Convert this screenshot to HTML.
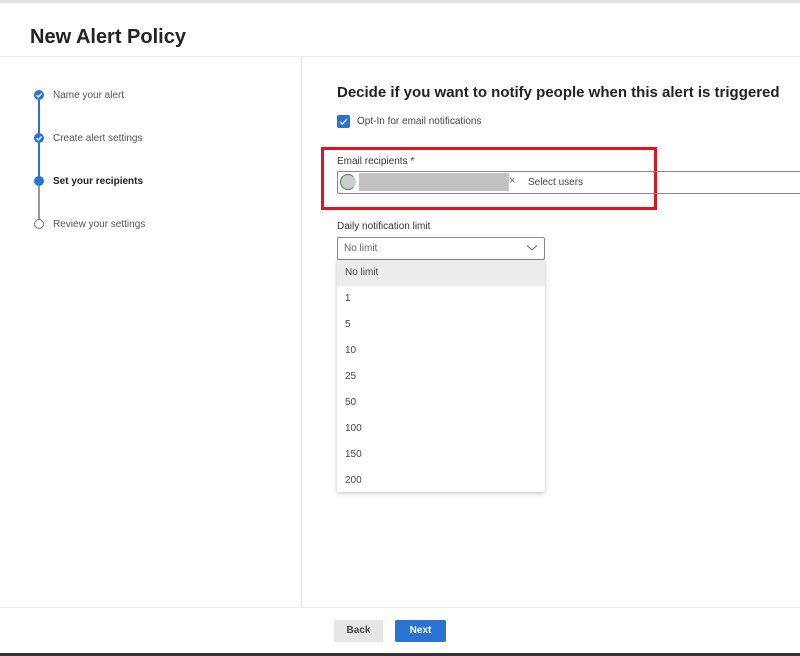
<!DOCTYPE html>
<html><head><style>
body{margin:0;width:800px;height:656px;position:relative;background:#fff;font-family:"Liberation Sans",sans-serif;color:#323130;overflow:hidden}
.a{position:absolute}
.st{font-size:10px;color:#555}
.c{position:absolute;width:10px;height:10px;border-radius:50%;background:#2a73d2}
.dd div{height:26px;line-height:26px;padding-left:8px;font-size:10px;color:#444}
</style></head><body>
<div class="a" style="left:0;top:0;width:800px;height:3px;background:#e2e2e2"></div>
<div class="a" style="left:30px;top:26px;font-size:20px;font-weight:bold;color:#222">New Alert Policy</div>
<div class="a" style="left:0;top:56px;width:800px;height:1px;background:#ececec"></div>
<div class="a" style="left:301px;top:57px;width:1px;height:550px;background:#e6e6e6"></div>
<div class="a" style="left:38px;top:100px;width:2px;height:34px;background:#2a73d2"></div>
<div class="a" style="left:38px;top:143px;width:2px;height:34px;background:#2a73d2"></div>
<div class="a" style="left:38px;top:186px;width:2px;height:34px;background:#999"></div>
<div class="c" style="left:34px;top:90px"></div><svg class="a" style="left:35px;top:91px" width="8" height="8"><path d="M1.5 4.2L3.3 6L6.5 2.5" stroke="#fff" stroke-width="1.3" fill="none"/></svg>
<div class="c" style="left:34px;top:133px"></div><svg class="a" style="left:35px;top:134px" width="8" height="8"><path d="M1.5 4.2L3.3 6L6.5 2.5" stroke="#fff" stroke-width="1.3" fill="none"/></svg>
<div class="c" style="left:34px;top:176px"></div>
<div class="a" style="left:34px;top:219px;width:8px;height:8px;border:1px solid #777;border-radius:50%"></div>
<div class="a st" style="left:53px;top:90px">Name your alert</div>
<div class="a st" style="left:53px;top:133px">Create alert settings</div>
<div class="a st" style="left:53px;top:176px;font-weight:bold;color:#222">Set your recipients</div>
<div class="a st" style="left:53px;top:219px">Review your settings</div>

<div class="a" style="left:337px;top:84px;font-size:15px;font-weight:bold;color:#222">Decide if you want to notify people when this alert is triggered</div>
<div class="a" style="left:337px;top:115px;width:13px;height:13px;background:#2a73d2;border-radius:2px"></div>
<svg class="a" style="left:338px;top:116px" width="11" height="11"><path d="M2 5.8L4.3 8L9 3" stroke="#fff" stroke-width="1.2" fill="none"/></svg>
<div class="a" style="left:357px;top:116px;font-size:10px;color:#444">Opt-In for email notifications</div>

<div class="a" style="left:321px;top:147px;width:330px;height:57px;border:3px solid #e0131f"></div>
<div class="a" style="left:337px;top:156px;font-size:10px;color:#333">Email recipients <span style="color:#c00">*</span></div>
<div class="a" style="left:337px;top:171px;width:470px;height:21px;border:1px solid #888;border-radius:2px"></div>
<div class="a" style="left:340px;top:174px;width:14px;height:14px;border-radius:50%;background:#ccc;border:1px solid #2e8b3e;border-right-color:#ccc"></div>
<div class="a" style="left:359px;top:173px;width:150px;height:18px;background:#c2c2c2"></div>
<div class="a" style="left:509px;top:175px;font-size:11px;color:#666">×</div>
<div class="a" style="left:528px;top:177px;font-size:10px;color:#444">Select users</div>

<div class="a" style="left:337px;top:221px;font-size:10px;color:#333">Daily notification limit</div>
<div class="a" style="left:337px;top:237px;width:206px;height:21px;border:1px solid #888;border-radius:2px"></div>
<div class="a" style="left:344px;top:243px;font-size:10px;color:#666">No limit</div>
<svg class="a" style="left:526px;top:244px" width="12" height="8"><path d="M1 1.5L6 6L11 1.5" stroke="#666" stroke-width="1" fill="none"/></svg>
<div class="a dd" style="left:337px;top:260px;width:208px;height:232px;box-shadow:0 1px 4px rgba(0,0,0,.25);background:#fff">
<div style="background:#ececec">No limit</div><div>1</div><div>5</div><div>10</div><div>25</div><div>50</div><div>100</div><div>150</div><div>200</div></div>

<div class="a" style="left:0;top:607px;width:800px;height:1px;background:#ececec"></div>
<div class="a" style="left:334px;top:620px;width:49px;height:22px;background:#e6e6e6;font-size:10px;font-weight:bold;line-height:22px;text-align:center;color:#444">Back</div>
<div class="a" style="left:395px;top:620px;width:51px;height:22px;background:#2a73d2;border-radius:2px;font-size:10px;font-weight:bold;line-height:22px;text-align:center;color:#fff">Next</div>
<div class="a" style="left:0;top:653px;width:800px;height:3px;background:#333"></div>
</body></html>
